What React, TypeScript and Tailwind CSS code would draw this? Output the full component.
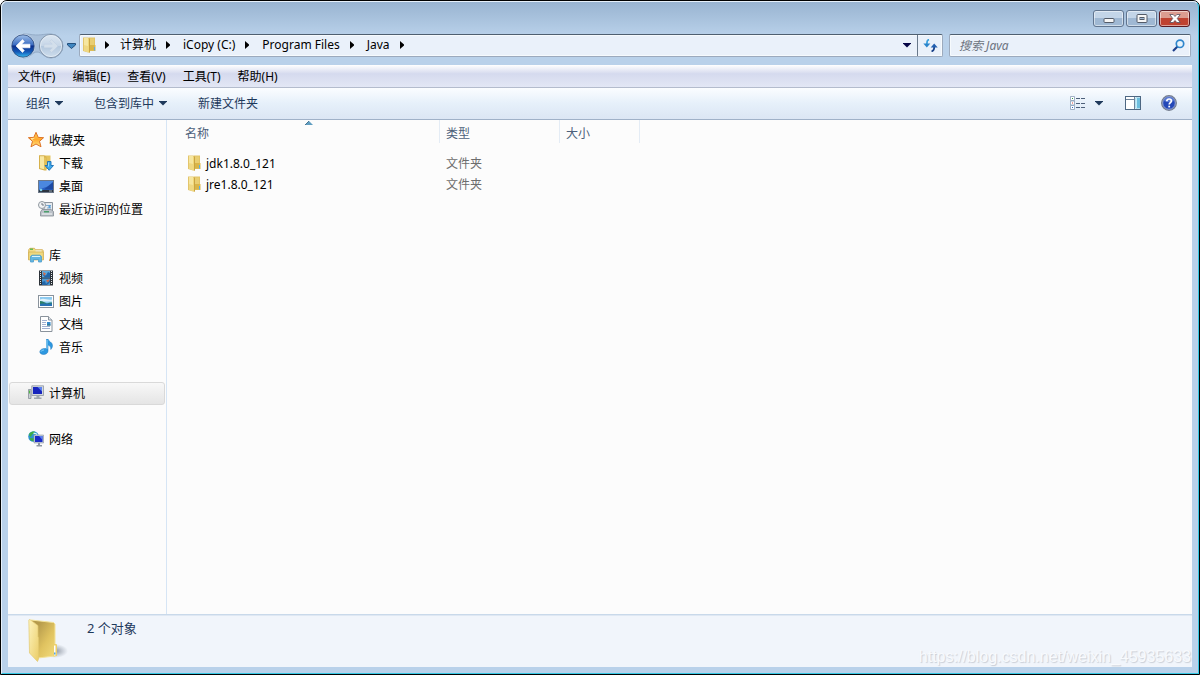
import type { ReactNode } from "react";

const FolderIcon = () => (
    <svg viewBox="0 0 16 16" className="mb-px h-4 w-4 shrink-0" aria-hidden="true">
        <path d="M8 .5h6v13.500H8z" fill="#e2c466" />
        <path d="M9 1.500h4v11.500H9z" fill="#e9ce72" />
        <path d="M9 8h4v5.500H9z" fill="#d9b548" />
        <path d="M13 8h1.500v6H13z" fill="#dcb74c" />
        <path d="M13 10h1v3.500h-1z" fill="#5aaee8" />
        <path d="M2 .5h5.500L9 1.500v14H7L2 14z" fill="#e3c56c" />
        <path d="M3 1h4v14L3 13.500z" fill="#f6e6a0" />
        <path d="M3 8l4 1v6l-4-1.500z" fill="#efd883" />
        <path d="M7 1.500 8 2v13.500l-1-.5z" fill="#f0d778" />
        <path d="M8 1.500h1v14H8z" fill="#c9a444" />
    </svg>
);

const StarIcon = () => (
    <svg viewBox="0 0 16 16" className="mb-px h-4 w-4 shrink-0" aria-hidden="true">
        <defs>
            <linearGradient id="star" x1="0" y1="0" x2="0" y2="1">
                <stop offset="0" stopColor="#ffd05a" />
                <stop offset="0.5" stopColor="#ffa92c" />
                <stop offset="1" stopColor="#ffe98a" />
            </linearGradient>
        </defs>
        <path d="M8 .3l2.200 5.100 5.400.3-4.100 3.600 1.500 5.500L8 12l-5 2.800 1.500-5.500L.4 5.700l5.400-.3z" fill="url(#star)" stroke="#dd7326" strokeWidth="1" strokeLinejoin="round" />
        <path d="M6.300 6.300 3 6.500l2.300 2" fill="none" stroke="#ffe7a0" />
    </svg>
);

const DownloadIcon = () => (
    <svg viewBox="0 0 16 16" className="mb-px h-4 w-4 shrink-0" aria-hidden="true">
        <path d="M7 .5h5.500v13.500H7z" fill="#e5c45e" />
        <path d="M1 .3h5.500L8.500 2v13.500H6.500L1 14z" fill="#d6b14c" />
        <path d="M2 1.300h4v13L2 13.300z" fill="#f8e8a4" />
        <path d="M6.500 2.500h1v12h-1z" fill="#efd16a" />
        <path d="M9.500 6.500H13v4h2.500L11.200 15.300 7 10.500h2.500z" fill="#3fa9ec" stroke="#1a6fb5" strokeWidth=".9" />
        <path d="M10.500 7.500v4" stroke="#9bdcff" fill="none" />
    </svg>
);

const DesktopIcon = () => (
    <svg viewBox="0 0 16 16" className="mb-px h-4 w-4 shrink-0" aria-hidden="true">
        <rect x="0.500" y="2.500" width="15" height="12" fill="#2a62c4" stroke="#6c7889" />
        <path d="M1 3h14v3.500L1 11.500z" fill="#4b88e0" />
        <path d="M15 4v7.500H6z" fill="#1d4aa4" />
        <path d="M1 12h14v2H1z" fill="#2b3440" />
        <circle cx="3" cy="12" r="1.300" fill="#7fd0e8" />
        <path d="M11 13h3" stroke="#9aa7b5" />
    </svg>
);

const RecentIcon = () => (
    <svg viewBox="0 0 16 16" className="mb-px h-4 w-4 shrink-0" aria-hidden="true">
        <path d="M6 1.500h8.500v9H6z" fill="#e6eaee" stroke="#8c949d" />
        <path d="M8 4.500h5M9 7h4" stroke="#83a7c9" />
        <path d="M10.500 4h2v3h-2z" fill="#58a0d8" />
        <path d="M4 8.500h9l2.500 2v4.500H2.500V11z" fill="#bcc2c9" stroke="#858d96" strokeWidth=".8" />
        <path d="M6 10h5v1.500H6z" fill="#4d9f6c" />
        <path d="M4 13h10" stroke="#f4f6f8" />
        <circle cx="4" cy="4" r="3.500" fill="#f1f3f5" stroke="#8f979f" />
        <path d="M4 2v2h2" fill="none" stroke="#656e78" strokeWidth=".9" />
    </svg>
);

const LibraryIcon = () => (
    <svg viewBox="0 0 16 16" className="mb-px h-4 w-4 shrink-0" aria-hidden="true">
        <path d="M.7 2.500 2 1.300h4.500l1 1.400H14.500l.7 1V12.500H.7z" fill="#f3dc86" stroke="#cfa94b" strokeWidth=".8" />
        <path d="M2 2.200h3" stroke="#44b549" strokeWidth="1.200" />
        <path d="M7.500 4h6" stroke="#f2f5f7" />
        <path d="M.6 5h14.800v8H.6z" fill="#eed87f" stroke="#cda747" strokeWidth=".6" />
        <path d="M2.500 15V9.500l1.500-1.300h8l1.500 1.300V15h-3v-2.500h-5V15z" fill="#62b6e2" stroke="#4c9dcb" strokeWidth=".8" />
        <path d="M4 9.500h8" stroke="#d8f2fd" />
    </svg>
);

const VideoIcon = () => (
    <svg viewBox="0 0 16 16" className="mb-px h-4 w-4 shrink-0" aria-hidden="true">
        <path d="M1 .5h14v15H1z" fill="#2c3238" />
        <path d="M4 1h8v6.500H4z" fill="#5ca9dc" />
        <path d="M4 8.500h8V15H4z" fill="#4c98d2" />
        <path d="M4 4l4 1.500L10 2l2 1v4.500H7zM4 12l3-1 1 3 4-4v2l-3 3H4z" fill="#2265a6" />
        <path d="M5 2l3 1.500-2 2.500zM8 10.500l4-1.500-2 3.500z" fill="#d46a45" />
        <path d="M2.500 1v14M13.500 1v14" stroke="#e5e9ec" strokeWidth="1" strokeDasharray="1 1" />
    </svg>
);

const PictureIcon = () => (
    <svg viewBox="0 0 16 16" className="mb-px h-4 w-4 shrink-0" aria-hidden="true">
        <rect x="0.500" y="2.500" width="15" height="12" fill="#fff" stroke="#8a939c" />
        <path d="M2 4h12v9H2z" fill="#8ccaf0" />
        <path d="M2 6.500c4-2 7 1 12 0v2H2z" fill="#e1f3fb" />
        <path d="M2 8c3 0 5 1.500 7 2.500 2-1 4-1.200 5-1V11H2z" fill="#2c8066" />
        <path d="M2 11c4-1 8 0 12-.5V13H2z" fill="#2872b4" />
    </svg>
);

const DocumentIcon = () => (
    <svg viewBox="0 0 16 16" className="mb-px h-4 w-4 shrink-0" aria-hidden="true">
        <path d="M2.500 .5h8l3.500 3.500v11.500H2.500z" fill="#fff" stroke="#8a939c" />
        <path d="M10.500 .5V4H14" fill="#dfe5ea" stroke="#8a939c" />
        <path d="M4 4.500h5M4 6.500h4M4 8.500h4M4 10.500h8M4 12.500h8" stroke="#a2b1d2" />
        <path d="M9 6h3.500v3.500H9z" fill="#3488ce" />
        <path d="M9 8.500h3.500v1H9z" fill="#2c6e6e" />
    </svg>
);

const MusicIcon = () => (
    <svg viewBox="0 0 16 16" className="mb-px h-4 w-4 shrink-0" aria-hidden="true">
        <path d="M8.500 0H10c.3 2.500 4.500 3 4.500 6.500 0 1.500-.5 2.500-1.700 4C13 7.500 11.500 6.500 10 6v6c0 2-2 3.500-4.500 3.500-2 0-3.700-1-3.700-2.700 0-2 2.500-3.300 4.700-3.300h2z" fill="#2d98e0" stroke="#1d77bd" strokeWidth=".5" />
        <path d="M9 .8v9M3 12.500c.5-1 1.800-1.500 3-1.500" stroke="#8dd6fb" fill="none" />
    </svg>
);

const ComputerIcon = () => (
    <svg viewBox="0 0 16 16" className="mb-px h-4 w-4 shrink-0" aria-hidden="true">
        <path d="M.5 4.500h2.500v9H.5z" fill="#c9ced3" stroke="#878f97" strokeWidth=".8" />
        <path d="M1.500 5.500v3" stroke="#50b944" />
        <path d="M3.800 .8h11.700v9.700H3.800z" fill="#d3d8de" stroke="#8d969f" strokeWidth=".8" />
        <path d="M5 2h9v7H5z" fill="#1724bd" />
        <path d="M9.500 2H14v4.500z" fill="#5b80ef" />
        <path d="M8.500 10.500h3v2h2V14H6v-1.500h2.500z" fill="#a0a7af" />
    </svg>
);

const NetworkIcon = () => (
    <svg viewBox="0 0 16 16" className="mb-px h-4 w-4 shrink-0" aria-hidden="true">
        <circle cx="5.500" cy="5.500" r="5.300" fill="#2b93d4" />
        <path d="M1.500 2.300C3 .8 5 .3 7 .6L5.500 3 4 3.500 3 6 1 4.500zM3 7l3 .5-.5 3C3.500 10 2 9 1.500 7.500z" fill="#3eae46" />
        <path d="M5.500 2.500c2-.5 3 .3 3.500 1.500" stroke="#d8f5fd" strokeWidth="1.400" fill="none" />
        <path d="M6 4h9.500v8H6z" fill="#c4cfdb" stroke="#8d969f" strokeWidth=".6" />
        <path d="M7 5h7.500v6H7z" fill="#1a2bc8" />
        <path d="M11 5h3.500v4z" fill="#5b80ef" />
        <path d="M10 12h2v2h2v1.500H8.500V14H10z" fill="#8f98a2" />
    </svg>
);

const LargeFolderIcon = () => (
    <svg viewBox="0 0 40 44" className="h-11 w-10 shrink-0" aria-hidden="true">
        <defs>
            <linearGradient id="folderBack" x1="0" y1="0" x2="1" y2="1">
                <stop offset="0.2" stopColor="#b59a4c" />
                <stop offset="0.6" stopColor="#e0c360" />
                <stop offset="1" stopColor="#f3dc7d" />
            </linearGradient>
            <linearGradient id="folderFront" x1="0" y1="0" x2="1" y2="1">
                <stop offset="0" stopColor="#fdf3bd" />
                <stop offset="1" stopColor="#ebcd68" />
            </linearGradient>
            <radialGradient id="folderShade">
                <stop offset="0" stopColor="#6f7886" stopOpacity=".8" />
                <stop offset="1" stopColor="#87909e" stopOpacity="0" />
            </radialGradient>
        </defs>
        <ellipse cx="27" cy="33" rx="13" ry="7" fill="url(#folderShade)" />
        <path d="M3 2 25.500 4.500 27 6v32L10 40z" fill="url(#folderBack)" stroke="#f4e39a" />
        <path d="M25.500 26h2.500q1 0 1 1v11l-3.500.5z" fill="#eccf6b" />
        <path d="M26 27.500h1.500v10H26z" fill="#fff" />
        <path d="M26 34.500h1.500v2H26z" fill="#4fa3e8" />
        <path d="M.8 2Q1 1.400 2 1.600l8 6v11l.5 1v21.500L9.500 43.500 1.500 35z" fill="url(#folderFront)" stroke="#e3c970" strokeWidth=".7" />
    </svg>
);

const DownArrow = () => (
    <svg viewBox="0 0 8 5" className="h-[5px] w-2 shrink-0" aria-hidden="true">
        <path d="M0 0h8v.5L4 4.500 0 .5z" fill="currentColor" />
    </svg>
);

const CrumbArrow = () => (
    <svg viewBox="0 0 5 8" className="h-2 w-[5px] shrink-0" aria-hidden="true">
        <path d="M0 0l4 3.500v1L0 8z" fill="#000" />
    </svg>
);

const crumbs = ["计算机", "iCopy (C:)", "Program Files", "Java"];

const menus = ["文件(F)", "编辑(E)", "查看(V)", "工具(T)", "帮助(H)"];

const groups: { label: string; icon: ReactNode; selected?: boolean; items: { label: string; icon: ReactNode }[] }[] = [
    {
        label: "收藏夹",
        icon: <StarIcon />,
        items: [
            { label: "下载", icon: <DownloadIcon /> },
            { label: "桌面", icon: <DesktopIcon /> },
            { label: "最近访问的位置", icon: <RecentIcon /> },
        ],
    },
    {
        label: "库",
        icon: <LibraryIcon />,
        items: [
            { label: "视频", icon: <VideoIcon /> },
            { label: "图片", icon: <PictureIcon /> },
            { label: "文档", icon: <DocumentIcon /> },
            { label: "音乐", icon: <MusicIcon /> },
        ],
    },
    { label: "计算机", icon: <ComputerIcon />, selected: true, items: [] },
    { label: "网络", icon: <NetworkIcon />, items: [] },
];

const files = [
    { name: "jdk1.8.0_121", type: "文件夹" },
    { name: "jre1.8.0_121", type: "文件夹" },
];

const columns = [
    { label: "名称", sorted: true },
    { label: "类型", sorted: false },
    { label: "大小", sorted: false },
];

function WindowButtons() {
    const base = "flex h-[17px] w-[31px] items-center justify-center rounded-[3px] border shadow-[inset_0_0_0_1px_rgba(255,255,255,0.5)]";
    const plain = "border-[#61758f] bg-linear-to-b from-[#c3d5e8] from-50% to-[#9fb8d3] to-50%";
    return (
        <div className="flex h-8 items-start justify-end gap-[2px] pt-2 pr-[2px]">
            <button type="button" aria-label="最小化" className={`${base} ${plain}`}>
                <svg viewBox="0 0 12 9" className="h-[9px] w-3" aria-hidden="true">
                    <rect x="1" y="4.500" width="10" height="4" rx="1" fill="#f6f6f6" stroke="#535b68" />
                </svg>
            </button>
            <button type="button" aria-label="最大化" className={`${base} ${plain}`}>
                <svg viewBox="0 0 12 9" className="h-[9px] w-3" aria-hidden="true">
                    <rect x="1" y=".5" width="10" height="8" rx="1" fill="#f6f6f6" stroke="#535b68" />
                    <rect x="4" y="3.500" width="4" height="2" fill="#9fb8d3" stroke="#535b68" />
                </svg>
            </button>
            <button type="button" aria-label="关闭" className={`${base} border-[#5b1a22] bg-linear-to-b from-[#dc9c90] from-50% to-[#bf4231] to-50%`}>
                <svg viewBox="0 0 12 9" className="h-[9px] w-3" aria-hidden="true">
                    <path d="M.8 .5h3.400L6 2.500 7.800.5h3.400L8.300 4.500l2.900 4H7.800L6 6.500l-1.800 2H.8l2.900-4z" fill="#fff" stroke="#55505f" strokeWidth=".8" />
                </svg>
            </button>
        </div>
    );
}

function NavButtons() {
    return (
        <div className="flex w-[71px] shrink-0 items-center">
            <svg viewBox="0 0 58 26" className="h-[26px] w-[58px]" role="img" aria-label="后退和前进">
                <defs>
                    <linearGradient id="navBack" x1="0" y1="0" x2="0" y2="1">
                        <stop offset="0" stopColor="#a4c3ea" />
                        <stop offset="0.450" stopColor="#3a6cc2" />
                        <stop offset="0.500" stopColor="#0c2f8c" />
                        <stop offset="0.750" stopColor="#1459b8" />
                        <stop offset="1" stopColor="#38c4f4" />
                    </linearGradient>
                    <linearGradient id="navFwd" x1="0" y1="0" x2="0" y2="1">
                        <stop offset="0" stopColor="#dce7f2" />
                        <stop offset="0.480" stopColor="#c6d6e7" />
                        <stop offset="0.520" stopColor="#b3c8de" />
                        <stop offset="1" stopColor="#cfdeed" />
                    </linearGradient>
                </defs>
                <path d="M15 1c8 0 9 1 14 1S36 1 43 1a12 12 0 0 1 0 24c-7 0-9-6-14-6s-6 6-14 6z" fill="#a9c0da" stroke="#93abc7" />
                <circle cx="15" cy="13" r="11.700" fill="url(#navBack)" stroke="#dfe9f4" strokeWidth=".8" />
                <circle cx="15" cy="13" r="11.200" fill="none" stroke="#2a4778" strokeWidth=".8" />
                <path d="M14.500 6.500 8 13l6.500 6.500 1.800-2-2.600-2.700H22v-3.600h-8.300l2.600-2.700z" fill="#fff" stroke="#fff" strokeWidth=".6" />
                <circle cx="43" cy="13" r="11.600" fill="url(#navFwd)" stroke="#8294aa" />
                <circle cx="43" cy="13" r="10.600" fill="none" stroke="#e3ecf5" strokeWidth=".8" />
                <path d="M43.500 6.500 50 13l-6.500 6.500-1.800-2 2.600-2.700H36v-3.600h8.300l-2.600-2.700z" fill="#d3dfeb" stroke="#bccde0" strokeWidth=".5" />
            </svg>
            <button type="button" aria-label="最近浏览的位置" className="ml-px">
                <svg viewBox="0 0 9 6" className="h-[6px] w-[9px]" aria-hidden="true">
                    <path d="M.5 .5h8v1.500l-4 3.500-4-3.500z" fill="#3f86c0" stroke="#1b4674" strokeWidth=".9" />
                </svg>
            </button>
        </div>
    );
}

function AddressRow() {
    return (
        <div className="flex h-[23px] items-center pr-px">
            <NavButtons />
            <div className="flex h-[23px] min-w-0 flex-1 rounded-[2px] border border-[#9caabd] border-t-[#4f5f70] bg-[#eaf1fa] shadow-[inset_0_0_0_1px_#f6fafd]">
                <nav aria-label="地址" className="flex min-w-0 flex-1 items-center gap-2 pb-px pl-px">
                    <FolderIcon />
                    <ul className="flex items-center gap-3">
                        {crumbs.map((crumb, i) => (
                            <li key={crumb} className="flex items-center gap-[10px] whitespace-nowrap">
                                {i === 0 && <CrumbArrow />}
                                <button type="button">{crumb}</button>
                                <CrumbArrow />
                            </li>
                        ))}
                    </ul>
                </nav>
                <button type="button" aria-label="以前的位置" className="flex w-5 items-center justify-center text-[#050546]">
                    <DownArrow />
                </button>
                <button type="button" aria-label="刷新" className="flex w-[25px] items-center justify-center border-l border-[#68788a]">
                    <svg viewBox="0 0 15 13" className="h-[13px] w-[15px]" aria-hidden="true">
                        <path d="M6 .5C4.200 1 3.800 2.500 3.800 5" fill="none" stroke="#3aa0dc" strokeWidth="1.800" />
                        <path d="M.3 4.500h7L3.800 8.500z" fill="#2a85cc" />
                        <path d="M8.500 12.300c2.200-.3 2.700-1.800 2.700-4.300" fill="none" stroke="#173f87" strokeWidth="1.800" />
                        <path d="M7.700 8.500h7L11.200 4.500z" fill="#2360b0" />
                    </svg>
                </button>
            </div>
            <div className="ml-[6px] flex h-[23px] w-[242px] shrink-0 items-center rounded-[2px] border border-[#9caabd] border-t-[#4f5f70] bg-[#eaf1fa] pr-[5px] pl-[9px] shadow-[inset_0_0_0_1px_#f6fafd]">
                <input
                    type="text"
                    aria-label="搜索 Java"
                    placeholder="搜索 Java"
                    className="min-w-0 flex-1 bg-transparent italic outline-none placeholder:text-[#6d7480]"
                />
                <button type="button" aria-label="搜索">
                    <svg viewBox="0 0 13 13" className="h-[13px] w-[13px]" aria-hidden="true">
                        <path d="M1 12 5.500 7.500" stroke="#1d3f8a" strokeWidth="2.200" />
                        <circle cx="8" cy="4.800" r="3.700" fill="#e8f3fb" stroke="#2e86cc" strokeWidth="1.700" />
                    </svg>
                </button>
            </div>
        </div>
    );
}

function Toolbar() {
    return (
        <div className="flex h-8 items-center border-b border-[#a0b1c8] bg-linear-to-b from-[#fbfdff] via-[#e6f0fa] via-50% to-[#dce6f4] pr-[15px] pl-[18px] text-[#1e395b]">
            <button type="button" className="flex items-center gap-[5px]">
                组织
                <DownArrow />
            </button>
            <button type="button" className="ml-[31px] flex items-center gap-[5px]">
                包含到库中
                <DownArrow />
            </button>
            <button type="button" className="ml-[31px]">新建文件夹</button>
            <div className="ml-auto flex items-center pb-px">
                <button type="button" aria-label="更改视图" className="flex items-center gap-[9px]">
                    <svg viewBox="0 0 16 14" className="h-[14px] w-4" aria-hidden="true">
                        <path d="M.5 .5h4v4h-4zM.5 5h4v4h-4zM.5 9.500h4v4h-4z" fill="#fff" stroke="#8aa0b8" strokeWidth=".8" />
                        <path d="M2 2h1v1H2z" fill="#2c9a4b" />
                        <path d="M2 6.500h1v1H2z" fill="#e04436" />
                        <path d="M2 11h1v1H2z" fill="#2664c8" />
                        <path d="M6 2.500h4M11 2.500h4M6 7.500h4M11 7.500h4M6 11.500h4M11 11.500h4" stroke="#4d607a" />
                    </svg>
                    <DownArrow />
                </button>
                <button type="button" aria-label="显示预览窗格" className="ml-[22px]">
                    <svg viewBox="0 0 16 14" className="h-[14px] w-4" aria-hidden="true">
                        <rect x=".5" y=".5" width="15" height="13" fill="#fff" stroke="#4d6782" />
                        <path d="M1 3.500h9M9.500 1v12" stroke="#6d8298" fill="none" />
                        <path d="M10.500 1.500h4.500v11h-4.500z" fill="#6dbede" />
                        <path d="M11.500 2v10" stroke="#c2ecf8" />
                    </svg>
                </button>
                <button type="button" aria-label="获取帮助" className="ml-5">
                    <svg viewBox="0 0 16 16" className="h-4 w-4" aria-hidden="true">
                        <circle cx="8" cy="8" r="7.300" fill="#2448b8" stroke="#777f8e" strokeWidth="1.300" />
                        <circle cx="8" cy="8" r="6.300" fill="none" stroke="#c3cbe0" strokeWidth=".7" />
                        <path d="M3 6a5.200 5.200 0 0 1 10 0c-3 1.500-7 1.500-10 0z" fill="#7d9be6" opacity=".6" />
                        <path d="M5.800 6.300C5.800 4.800 6.800 4 8.100 4s2.300.8 2.300 2c0 1.600-2.200 1.600-2.200 3.500" fill="none" stroke="#fff" strokeWidth="1.700" />
                        <path d="M7.300 10.700h1.800v1.700H7.300z" fill="#fff" />
                    </svg>
                </button>
            </div>
        </div>
    );
}

function Sidebar() {
    return (
        <aside className="w-[159px] shrink-0 border-r border-[#d6e5f5] pt-[9px]">
            {groups.map((group) => (
                <div key={group.label} className="mb-[23px] px-px">
                    <button
                        type="button"
                        className={`flex h-[23px] w-full items-center gap-[5px] rounded-[3px] border pl-[18px] ${
                            group.selected ? "border-[#d9d9d9] bg-linear-to-b from-[#f8f8f8] to-[#e5e5e5]" : "border-transparent"
                        }`}
                    >
                        {group.icon}
                        {group.label}
                    </button>
                    {group.items.map((item) => (
                        <button key={item.label} type="button" className="flex h-[23px] w-full items-center gap-[5px] pl-[29px]">
                            {item.icon}
                            {item.label}
                        </button>
                    ))}
                </div>
            ))}
        </aside>
    );
}

function FileList() {
    return (
        <main className="min-w-0 flex-1 pl-3">
            <table className="w-[461px] table-fixed border-collapse text-left">
                <colgroup>
                    <col className="w-[261px]" />
                    <col className="w-[120px]" />
                    <col className="w-20" />
                </colgroup>
                <thead>
                    <tr className="h-[33px] align-top text-[#4c607a]">
                        {columns.map((column) => (
                            <th key={column.label} scope="col" className="p-0 font-normal">
                                <div className="relative flex h-[23px] items-center border-r border-[#e4ecf5] pt-1 pl-[6px]">
                                    {column.label}
                                    {column.sorted && (
                                        <svg viewBox="0 0 8 4" className="absolute top-px left-1/2 h-1 w-2 -translate-x-1/2" aria-hidden="true">
                                            <path d="M0 4 4 0l4 4z" fill="#5f9dc0" />
                                            <path d="M0 4 4 0" stroke="#2f5f80" strokeWidth=".8" />
                                        </svg>
                                    )}
                                </div>
                            </th>
                        ))}
                    </tr>
                </thead>
                <tbody>
                    {files.map((file) => (
                        <tr key={file.name} className="h-[21px]">
                            <td className="p-0">
                                <div className="flex h-[21px] items-center gap-1 pl-[7px]">
                                    <FolderIcon />
                                    {file.name}
                                </div>
                            </td>
                            <td className="p-0 pl-[6px] text-[#6d6d6d]">{file.type}</td>
                            <td className="p-0" />
                        </tr>
                    ))}
                </tbody>
            </table>
        </main>
    );
}

export default function App() {
    return (
        <div className="min-h-screen bg-white font-['Noto_Sans','Noto_Sans_CJK_SC',sans-serif] text-[12px] leading-4 text-black">
            <div className="flex min-h-screen flex-col rounded-t-[7px] border border-black bg-[#b9d1ea]">
                <div className="flex flex-1 flex-col rounded-t-[6px] border border-t-[#e6f0fa] border-r-[#35c8e4] border-b-[#35c8e4] border-l-[#e6f0fa] bg-linear-to-b from-[#99b4d1] to-[#b9d1ea] to-[34px] px-[6px] pb-[6px]">
                    <WindowButtons />
                    <AddressRow />
                    <div className="mt-2 flex h-[23px] items-center gap-[17px] border-b border-[#b4bccd] bg-linear-to-b from-white via-[#d5daee] via-40% to-[#e3e7f5] pt-px pl-[10px]">
                        {menus.map((menu) => (
                            <button key={menu} type="button">
                                {menu}
                            </button>
                        ))}
                    </div>
                    <Toolbar />
                    <div className="flex flex-1 bg-[#fcfcfc]">
                        <Sidebar />
                        <FileList />
                    </div>
                    <footer className="relative flex h-[53px] items-start border-t border-[#c9d9ea] bg-[#f1f5fb] pt-[3px] pl-5 text-[#1e395b] shadow-[inset_0_1px_0_#dfe8f3]">
                        <LargeFolderIcon />
                        <p className="ml-[19px] text-[13px] leading-5">2 个对象</p>
                        <p className="absolute right-px bottom-0 font-['Liberation_Sans',sans-serif] text-[16px] leading-5 text-[#f8fafd] [text-shadow:1px_1px_1px_#c9ced6]">
                            https://blog.csdn.net/weixin_45935633
                        </p>
                    </footer>
                </div>
            </div>
        </div>
    );
}
